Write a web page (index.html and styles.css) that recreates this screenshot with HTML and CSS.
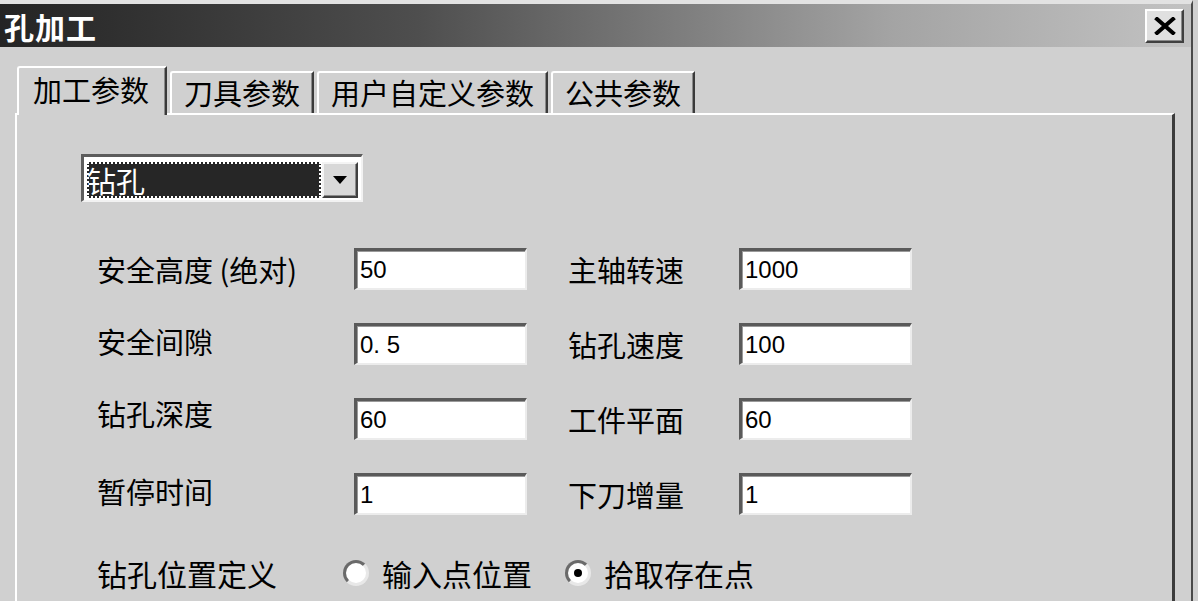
FILE: index.html
```html
<!DOCTYPE html>
<html lang="zh-CN">
<head>
<meta charset="utf-8">
<title>孔加工</title>
<link rel="stylesheet" href="styles.css">
</head>
<body>
<div class="window">
  <div class="titlebar">
    <span class="title">孔加工</span>
    <div class="close-btn">
      <svg width="22" height="18" viewBox="0 0 22 18"><path d="M3 2 L19 16 M19 2 L3 16" stroke="#000" stroke-width="4" stroke-linecap="square"/></svg>
    </div>
  </div>
  <div class="tabs">
    <div class="tab active">加工参数</div>
    <div class="tab">刀具参数</div>
    <div class="tab">用户自定义参数</div>
    <div class="tab">公共参数</div>
  </div>
  <div class="panel">
    <div class="combo">
      <div class="combo-field"><span>钻孔</span></div>
      <div class="combo-btn">
        <svg width="14" height="8" viewBox="0 0 14 8"><path d="M0 0 H14 L7 8 Z" fill="#000"/></svg>
      </div>
    </div>
    <div class="fields">
      <div class="label">安全高度 (绝对)</div>
      <div class="input">50</div>
      <div class="label">主轴转速</div>
      <div class="input">1000</div>

      <div class="label lift-1">安全间隙</div>
      <div class="input">0. 5</div>
      <div class="label">钻孔速度</div>
      <div class="input">100</div>

      <div class="label lift-2">钻孔深度</div>
      <div class="input">60</div>
      <div class="label">工件平面</div>
      <div class="input">60</div>

      <div class="label lift-1">暂停时间</div>
      <div class="input">1</div>
      <div class="label">下刀增量</div>
      <div class="input">1</div>
    </div>
    <div class="radio-row">
      <div class="radio-label">钻孔位置定义</div>
      <div class="radio-item"><span class="radio"></span><span>输入点位置</span></div>
      <div class="radio-item"><span class="radio checked"></span><span>拾取存在点</span></div>
    </div>
  </div>
</div>
</body>
</html>
```

FILE: styles.css
```css
html, body {
  margin: 0;
  padding: 0;
  background: #d0d0d0;
  overflow: hidden;
}

.window {
  width: 1193px;
  height: 601px;
  border-right: 2px solid #4a4a4a;
  border-top: 4px solid #e2e2e2;
  background: #d0d0d0;
  box-sizing: border-box;
  font-family: "Noto Sans CJK SC", "Noto Sans", sans-serif;
  color: #000;
  overflow: hidden;
}

.titlebar {
  height: 43px;
  background: linear-gradient(to right, #242424 0%, #4e4e4e 35%, #a4a4a4 75%, #c2c2c2 100%);
  display: flex;
  align-items: center;
  justify-content: space-between;
  padding: 0 7px 0 4px;
}

.title {
  color: #fff;
  font-weight: bold;
  font-size: 30px;
  line-height: 1;
  letter-spacing: 1px;
}

.close-btn {
  width: 39px;
  height: 34px;
  box-sizing: border-box;
  background: #e0e0e0;
  border-top: 2px solid #fff;
  border-left: 2px solid #fff;
  border-right: 2px solid #404040;
  border-bottom: 2px solid #404040;
  box-shadow: inset -1px -1px 0 #8a8a8a;
  display: flex;
  align-items: center;
  justify-content: center;
}

.tabs {
  display: flex;
  align-items: flex-end;
  gap: 3px;
  padding-left: 17px;
  margin-top: 19px;
  height: 47px;
  position: relative;
  z-index: 2;
}

.tab {
  height: 42px;
  box-sizing: border-box;
  font-size: 29px;
  line-height: 38px;
  padding: 0 12px 0 12px;
  border-top: 2px solid #fff;
  border-left: 2px solid #fff;
  border-right: 2px solid #3a3a3a;
  border-top-left-radius: 3px;
  box-shadow: inset -1px 0 0 #8a8a8a;
  background: #d0d0d0;
  white-space: nowrap;
}

.tab.active {
  height: 49px;
  margin-bottom: -2px;
  padding: 0 16px 0 14px;
  line-height: 42px;
}

.panel {
  margin-left: 15px;
  width: 1160px;
  height: 500px;
  box-sizing: border-box;
  border-top: 2px solid #fff;
  border-left: 2px solid #fff;
  border-right: 3px solid #3c3c3c;
  padding: 39px 0 0 64px;
  position: relative;
  z-index: 1;
}

.combo {
  width: 282px;
  height: 48px;
  box-sizing: border-box;
  border-top: 3px solid #5c5c5c;
  border-left: 3px solid #5c5c5c;
  border-bottom: 2px solid #f2f2f2;
  border-right: 2px solid #f2f2f2;
  background: #fff;
  padding: 5px 3px 2px 3px;
  display: flex;
  gap: 1px;
}

.combo-field {
  flex: 1;
  background: #262626;
  outline: 2px dotted #fff;
  outline-offset: -2px;
  color: #fff;
  font-size: 29px;
  line-height: 34px;
  display: flex;
  align-items: center;
}

.combo-btn {
  width: 36px;
  box-sizing: border-box;
  background: #d8d8d8;
  border-top: 2px solid #f4f4f4;
  border-left: 2px solid #f4f4f4;
  border-right: 2px solid #404040;
  border-bottom: 2px solid #404040;
  box-shadow: inset -1px -1px 0 #8a8a8a;
  display: flex;
  align-items: center;
  justify-content: center;
}

.fields {
  margin: 46px 0 0 16px;
  display: grid;
  grid-template-columns: 257px 214px 171px 173px;
  grid-auto-rows: 42px;
  row-gap: 33px;
  align-items: center;
}

.label {
  font-size: 29px;
  line-height: 1;
  white-space: nowrap;
}

.label.lift-1 { margin-bottom: 6px; }
.label.lift-2 { margin-bottom: 12px; }

.input {
  width: 173px;
  height: 42px;
  box-sizing: border-box;
  background: #fff;
  border-top: 3px solid #5a5a5a;
  border-left: 3px solid #5a5a5a;
  border-bottom: 2px solid #ececec;
  border-right: 2px solid #ececec;
  box-shadow: inset 1px 1px 0 #9a9a9a;
  font-family: "Liberation Sans", Arial, sans-serif;
  font-size: 24px;
  line-height: 37px;
  padding-left: 3px;
  white-space: pre;
}

.radio-row {
  margin: 43px 0 0 16px;
  display: flex;
  align-items: center;
  height: 30px;
  font-size: 30px;
  line-height: 1;
}

.radio-label {
  width: 246px;
}

.radio-item {
  display: flex;
  align-items: center;
  gap: 13px;
  margin-right: 33px;
}

.radio {
  width: 26px;
  height: 26px;
  box-sizing: border-box;
  border-radius: 50%;
  background: #fff;
  border: 3px solid;
  border-color: #6a6a6a #e8e8e8 #e8e8e8 #6a6a6a;
  display: flex;
  align-items: center;
  justify-content: center;
}

.radio.checked::after {
  content: "";
  width: 8px;
  height: 8px;
  border-radius: 50%;
  background: #000;
}
```
